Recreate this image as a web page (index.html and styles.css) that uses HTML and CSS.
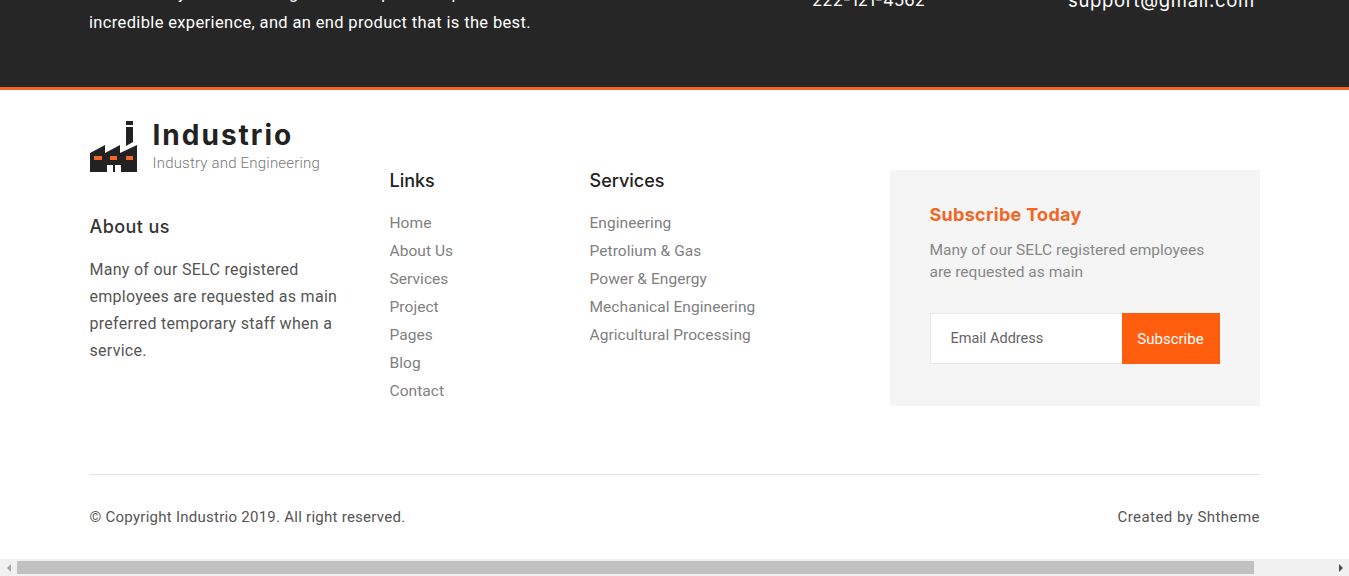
FILE: index.html
```html
<!DOCTYPE html>
<html>
  <head>
    <title>Industrio Footer</title>
    <meta charset="UTF-8" />
    <link rel="stylesheet" href="styles.css">
  </head>
  <body>
    <section class="contact-band">
      <p class="band-text">
        Work closely with all the right team to plan and push for an<br />
        incredible experience, and an end product that is the best.
      </p>
      <p class="band-phone">222-121-4562</p>
      <p class="band-mail">support@gmail.com</p>
    </section>

    <footer class="footer">
      <div class="footer-top">
        <div class="col-about">
          <div class="logo">
            <svg class="logo-icon" width="47" height="51" viewBox="0 0 47 51">
              <path fill="#222" d="M36 0h7v4h-7z" />
              <path fill="#222" d="M36 6h7v15l-7 4z" />
              <path fill="#222" d="M0 32l15-8v8l15-8v8l17-8v27H31v-7H17v7H0z" />
              <path fill="#222" d="M23 44h2v7h-2z" />
              <path fill="#f26522" d="M4 35h8v4H4zM20 35h7v4h-7zM36 35h7v4h-7z" />
            </svg>
            <div>
              <div class="logo-name">Industrio</div>
              <div class="logo-tag">Industry and Engineering</div>
            </div>
          </div>
          <h3 class="about-title">About us</h3>
          <p class="about-text">Many of our SELC registered employees are requested as main preferred temporary staff when a service.</p>
        </div>

        <div class="col-links">
          <h3 class="col-title">Links</h3>
          <ul class="link-list">
            <li>Home</li>
            <li>About Us</li>
            <li>Services</li>
            <li>Project</li>
            <li>Pages</li>
            <li>Blog</li>
            <li>Contact</li>
          </ul>
        </div>

        <div class="col-services">
          <h3 class="col-title">Services</h3>
          <ul class="link-list">
            <li>Engineering</li>
            <li>Petrolium &amp; Gas</li>
            <li>Power &amp; Engergy</li>
            <li>Mechanical Engineering</li>
            <li>Agricultural Processing</li>
          </ul>
        </div>

        <div class="subscribe">
          <h3 class="subscribe-title">Subscribe Today</h3>
          <p class="subscribe-text">Many of our SELC registered employees are requested as main</p>
          <form class="subscribe-form">
            <input class="subscribe-input" type="text" placeholder="Email Address" />
            <button class="subscribe-btn" type="button">Subscribe</button>
          </form>
        </div>
      </div>

      <div class="footer-bottom">
        <span>© Copyright Industrio 2019. All right reserved.</span>
        <span class="credit">Created by Shtheme</span>
      </div>
    </footer>

    <div class="scrollbar">
      <span class="arrow-left"></span>
      <div class="scroll-track"><div class="scroll-thumb"></div></div>
      <span class="arrow-right"></span>
    </div>
  </body>
</html>
```

FILE: styles.css
```css
html,
body {
  margin: 0;
  height: 576px;
  overflow: hidden;
}

body {
  display: flex;
  flex-direction: column;
  font-family: "Roboto", "Liberation Sans", sans-serif;
  color: #555;
  background: #fff;
}

p,
h3,
ul {
  margin: 0;
  padding: 0;
}

.contact-band {
  height: 87px;
  flex-shrink: 0;
  box-sizing: border-box;
  display: flex;
  align-items: flex-end;
  padding: 0 0 53px 89px;
  background: #262626;
  color: #fff;
  box-shadow: 0 3px 0 #f26522;
  overflow: hidden;
  position: relative;
  z-index: 1;
}

.band-text {
  width: 450px;
  flex-shrink: 0;
  font-size: 16.500px;
  line-height: 29px;
  letter-spacing: 0.35px;
  white-space: nowrap;
  margin-bottom: -3px;
}

.band-phone,
.band-mail {
  font-family: "Inter", sans-serif;
  line-height: 24px;
  margin-bottom: 22px;
}

.band-phone {
  width: 256px;
  margin-left: 273px;
  flex-shrink: 0;
  font-size: 17px;
}

.band-mail {
  font-size: 18.500px;
  letter-spacing: 0.65px;
}

.footer {
  flex: 1;
  padding: 33px 89px 0 89.500px;
}

.footer-top {
  display: flex;
  height: 355px;
  border-bottom: 1px solid #e3e3e3;
  box-sizing: border-box;
}

.col-about {
  width: 300px;
  flex-shrink: 0;
}

.logo {
  display: flex;
  gap: 16px;
  height: 86px;
}

.logo-icon {
  margin-top: 1px;
}

.logo-name {
  font-family: "Inter", sans-serif;
  font-size: 28px;
  font-weight: 700;
  line-height: 30px;
  letter-spacing: 2px;
  color: #222;
}

.logo-tag {
  font-size: 15px;
  line-height: 22px;
  font-weight: 300;
  letter-spacing: 0.2px;
  color: #777;
  margin-top: 2px;
}

.about-title {
  font-family: "Inter", sans-serif;
  font-size: 18px;
  font-weight: 500;
  line-height: 24px;
  letter-spacing: 0.4px;
  margin-top: 9px;
  color: #333;
}

.about-text {
  width: 255px;
  font-size: 16px;
  line-height: 27px;
  letter-spacing: 0.28px;
  margin-top: 17px;
}

.col-links {
  width: 200px;
  flex-shrink: 0;
  padding-top: 49px;
}

.col-services {
  width: 300px;
  flex-shrink: 0;
  padding-top: 49px;
}

.col-title {
  font-family: "Inter", sans-serif;
  font-size: 18px;
  font-weight: 500;
  line-height: 24px;
  color: #222;
  margin-bottom: 16px;
}

.link-list {
  list-style: none;
}

.link-list li {
  font-size: 15.500px;
  line-height: 28px;
  letter-spacing: 0.06px;
  color: #808080;
}

.subscribe {
  width: 370px;
  height: 236px;
  margin-top: 50px;
  box-sizing: border-box;
  padding: 33px 40px 0;
  background: #f5f5f5;
}

.subscribe-title {
  font-family: "Inter", sans-serif;
  font-size: 18px;
  font-weight: 700;
  line-height: 24px;
  letter-spacing: 0.3px;
  color: #f26522;
}

.subscribe-text {
  font-size: 15.500px;
  line-height: 22px;
  letter-spacing: 0.03px;
  color: #888;
  margin-top: 12px;
}

.subscribe-form {
  display: flex;
  margin-top: 30px;
  height: 51px;
}

.subscribe-input {
  width: 192px;
  box-sizing: border-box;
  border: 1px solid #e8e8e8;
  border-right: 0;
  padding: 0 20px;
  font-family: inherit;
  font-size: 14.500px;
  background: #fff;
}

.subscribe-input::placeholder {
  color: #666;
  opacity: 1;
}

.subscribe-btn {
  width: 98px;
  border: 0;
  padding: 0;
  font-family: inherit;
  font-size: 15px;
  color: #fff;
  background: #ff5e0e;
}

.footer-bottom {
  display: flex;
  justify-content: space-between;
  margin-top: 31px;
  font-size: 15px;
  line-height: 22px;
  letter-spacing: 0.26px;
  color: #555;
}

.credit {
  letter-spacing: 0.45px;
}

.scrollbar {
  height: 17px;
  flex-shrink: 0;
  display: flex;
  align-items: center;
  background: #f1f1f1;
}

.scroll-track {
  flex: 1;
  height: 13px;
}

.scroll-thumb {
  width: 1237px;
  height: 13px;
  background: #c1c1c1;
}

.arrow-left,
.arrow-right {
  width: 17px;
  flex-shrink: 0;
  box-sizing: border-box;
  display: flex;
  justify-content: center;
}

.arrow-left::before {
  content: "";
  border: 4px solid transparent;
  border-left: 0;
  border-right: 4px solid #a3a3a3;
}

.arrow-right::before {
  content: "";
  border: 4px solid transparent;
  border-right: 0;
  border-left: 4px solid #505050;
}
```
